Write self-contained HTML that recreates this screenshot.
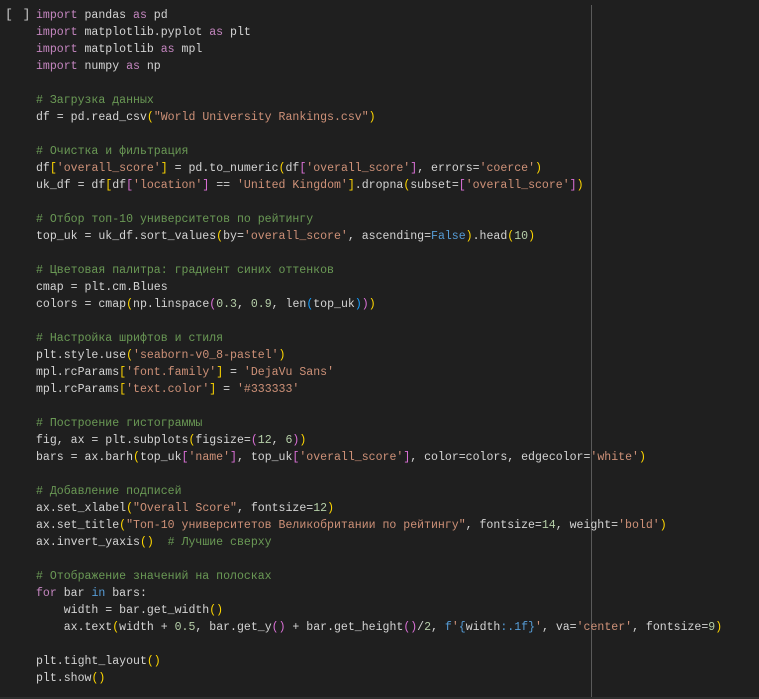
<!DOCTYPE html>
<html><head><meta charset="utf-8"><style>
html,body{margin:0;padding:0;background:#1f1f1f;width:759px;height:699px;overflow:hidden}
.wrap{position:relative;width:759px;height:699px;background:#1f1f1f}
.ruler{position:absolute;left:591px;top:5px;width:1px;height:692px;background:#5a5a5a}
.bottom{position:absolute;left:0;top:697px;width:759px;height:2px;background:#2e2e2e}
.run{position:absolute;left:5px;top:6px;font:13px "Liberation Mono",monospace;color:#c8c8c8;line-height:17px;letter-spacing:1px}
pre{position:absolute;left:36px;top:7px;margin:0;font-family:"Liberation Mono","DejaVu Sans Mono",monospace;font-size:11.55px;line-height:17px;color:#d4d4d4}
.k{color:#c586c0}.b{color:#569cd6}.c{color:#6a9955}.s{color:#ce9178}.n{color:#b5cea8}
.p1{color:#ffd700}.p2{color:#da70d6}.p3{color:#179fff}
</style></head><body><div class="wrap">
<div class="run">[ ]</div>
<div class="ruler"></div><div class="bottom"></div>
<pre><span class="k">import</span> pandas <span class="k">as</span> pd
<span class="k">import</span> matplotlib.pyplot <span class="k">as</span> plt
<span class="k">import</span> matplotlib <span class="k">as</span> mpl
<span class="k">import</span> numpy <span class="k">as</span> np

<span class="c"># Загрузка данных</span>
df = pd.read_csv<span class="p1">(</span><span class="s">"World University Rankings.csv"</span><span class="p1">)</span>

<span class="c"># Очистка и фильтрация</span>
df<span class="p1">[</span><span class="s">'overall_score'</span><span class="p1">]</span> = pd.to_numeric<span class="p1">(</span>df<span class="p2">[</span><span class="s">'overall_score'</span><span class="p2">]</span>, errors=<span class="s">'coerce'</span><span class="p1">)</span>
uk_df = df<span class="p1">[</span>df<span class="p2">[</span><span class="s">'location'</span><span class="p2">]</span> == <span class="s">'United Kingdom'</span><span class="p1">]</span>.dropna<span class="p1">(</span>subset=<span class="p2">[</span><span class="s">'overall_score'</span><span class="p2">]</span><span class="p1">)</span>

<span class="c"># Отбор топ-10 университетов по рейтингу</span>
top_uk = uk_df.sort_values<span class="p1">(</span>by=<span class="s">'overall_score'</span>, ascending=<span class="b">False</span><span class="p1">)</span>.head<span class="p1">(</span><span class="n">10</span><span class="p1">)</span>

<span class="c"># Цветовая палитра: градиент синих оттенков</span>
cmap = plt.cm.Blues
colors = cmap<span class="p1">(</span>np.linspace<span class="p2">(</span><span class="n">0.3</span>, <span class="n">0.9</span>, len<span class="p3">(</span>top_uk<span class="p3">)</span><span class="p2">)</span><span class="p1">)</span>

<span class="c"># Настройка шрифтов и стиля</span>
plt.style.use<span class="p1">(</span><span class="s">'seaborn-v0_8-pastel'</span><span class="p1">)</span>
mpl.rcParams<span class="p1">[</span><span class="s">'font.family'</span><span class="p1">]</span> = <span class="s">'DejaVu Sans'</span>
mpl.rcParams<span class="p1">[</span><span class="s">'text.color'</span><span class="p1">]</span> = <span class="s">'#333333'</span>

<span class="c"># Построение гистограммы</span>
fig, ax = plt.subplots<span class="p1">(</span>figsize=<span class="p2">(</span><span class="n">12</span>, <span class="n">6</span><span class="p2">)</span><span class="p1">)</span>
bars = ax.barh<span class="p1">(</span>top_uk<span class="p2">[</span><span class="s">'name'</span><span class="p2">]</span>, top_uk<span class="p2">[</span><span class="s">'overall_score'</span><span class="p2">]</span>, color=colors, edgecolor=<span class="s">'white'</span><span class="p1">)</span>

<span class="c"># Добавление подписей</span>
ax.set_xlabel<span class="p1">(</span><span class="s">"Overall Score"</span>, fontsize=<span class="n">12</span><span class="p1">)</span>
ax.set_title<span class="p1">(</span><span class="s">"Топ-10 университетов Великобритании по рейтингу"</span>, fontsize=<span class="n">14</span>, weight=<span class="s">'bold'</span><span class="p1">)</span>
ax.invert_yaxis<span class="p1">()</span>  <span class="c"># Лучшие сверху</span>

<span class="c"># Отображение значений на полосках</span>
<span class="k">for</span> bar <span class="b">in</span> bars:
    width = bar.get_width<span class="p1">()</span>
    ax.text<span class="p1">(</span>width + <span class="n">0.5</span>, bar.get_y<span class="p2">()</span> + bar.get_height<span class="p2">()</span>/<span class="n">2</span>, <span class="b">f</span><span class="s">'</span><span class="b">{</span>width<span class="b">:.1f}</span><span class="s">'</span>, va=<span class="s">'center'</span>, fontsize=<span class="n">9</span><span class="p1">)</span>

plt.tight_layout<span class="p1">()</span>
plt.show<span class="p1">()</span></pre>
</div></body></html>
